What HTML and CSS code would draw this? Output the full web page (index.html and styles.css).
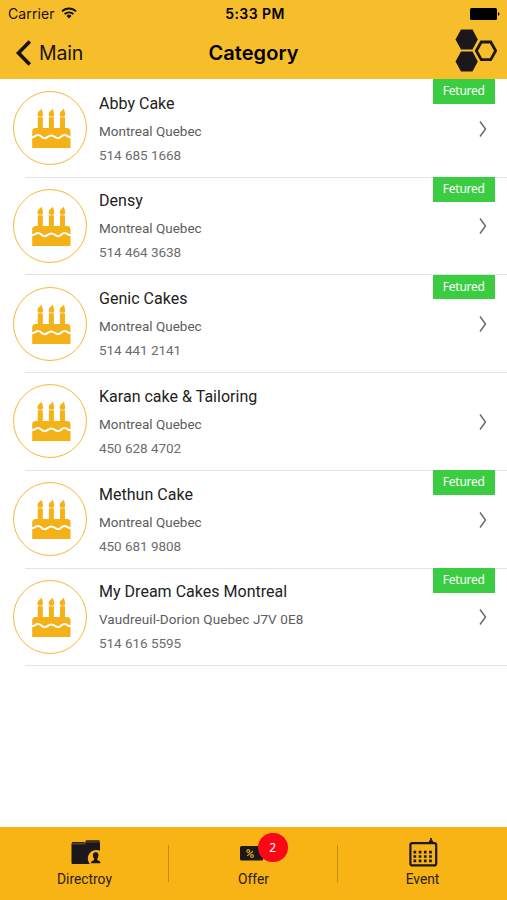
FILE: index.html
```html
<!DOCTYPE html>
<html lang="en">
<head>
<meta charset="utf-8">
<title>Category</title>
<link rel="stylesheet" href="styles.css">
</head>
<body>
<svg class="defs" aria-hidden="true">
  <symbol id="cake" viewBox="0 0 39 41">
    <path id="flame" d="M9.600.6c-.6 1.500-4.100 3-4.100 5.600a2.700 2.600 0 0 0 5.500 0c0-2-1-3.200-1.400-5.600z"/>
    <use href="#flame" x="11.200"/>
    <use href="#flame" x="22.200"/>
    <path d="M.2 40V23.500q0-3.500 3.300-3.500h2.300v-10.700h5V20h6.100v-10.700h5V20h6.100v-10.700h5V20h2.200q3.300 0 3.300 3.500V40z"/>
    <path d="M-.5 29.300C2.500 29.500 3.300 27 6 27c3 0 3.500 3.200 6.500 3.200s3.600-2.800 6.800-2.800 3.700 2.800 6.700 2.800S29.500 27 32.500 27c2.700 0 3.500 2.500 6.500 2.300" fill="none" stroke="#fff" stroke-width="2"/>
  </symbol>
  <symbol id="chevron" viewBox="0 0 10 18"><path d="M2 1.500 7.500 9 2 16.500" fill="none" stroke="#666" stroke-width="1.400"/></symbol>
</svg>

<header class="header">
  <div class="status">
    <div class="carrier"><span>Carrier</span>
      <svg class="wifi" viewBox="0 0 16 12"><g fill="none" stroke="#17120a" stroke-width="1.900"><path d="M1 4.400a10 10 0 0 1 14 0"/><path d="M3.600 7.200a6.200 6.200 0 0 1 8.800 0"/></g><path d="M8 11.400 5.500 8.900a3.500 3.500 0 0 1 5 0z" fill="#17120a"/></svg>
    </div>
    <span class="time">5:33 PM</span>
    <svg class="battery" viewBox="0 0 30 12"><rect width="27" height="12" rx="1.500"/><path d="M28 4q3 2 0 4z"/></svg>
  </div>
  <nav class="nav">
    <a class="back"><svg viewBox="0 0 17 26"><path d="M14.800 1.500 3.500 13l11.300 11.500" fill="none" stroke="#17120a" stroke-width="3.600"/></svg><span>Main</span></a>
    <h1>Category</h1>
    <svg class="logo" viewBox="0 0 42 43"><path d="M6 .5h11.500l5.300 10-5.300 10H6l-5.500-10zM6 22.500h11.500l5.300 10-5.300 10H6l-5.500-10z" fill="#1c171a"/><path d="M26.300 13h9.400l5 8.800-5 8.800h-9.400l-5-8.800z" fill="none" stroke="#1c171a" stroke-width="2.800"/></svg>
  </nav>
</header>

<main class="list">
  <article class="row"><div class="avatar"><svg><use href="#cake"/></svg></div><div class="info"><h2>Abby Cake</h2><p>Montreal Quebec</p><p class="phone">514 685 1668</p></div><span class="tag">Fetured</span><svg class="go"><use href="#chevron"/></svg></article>
  <article class="row"><div class="avatar"><svg><use href="#cake"/></svg></div><div class="info"><h2>Densy</h2><p>Montreal Quebec</p><p class="phone">514 464 3638</p></div><span class="tag">Fetured</span><svg class="go"><use href="#chevron"/></svg></article>
  <article class="row"><div class="avatar"><svg><use href="#cake"/></svg></div><div class="info"><h2>Genic Cakes</h2><p>Montreal Quebec</p><p class="phone">514 441 2141</p></div><span class="tag">Fetured</span><svg class="go"><use href="#chevron"/></svg></article>
  <article class="row"><div class="avatar"><svg><use href="#cake"/></svg></div><div class="info"><h2>Karan cake &amp; Tailoring</h2><p>Montreal Quebec</p><p class="phone">450 628 4702</p></div><svg class="go"><use href="#chevron"/></svg></article>
  <article class="row"><div class="avatar"><svg><use href="#cake"/></svg></div><div class="info"><h2>Methun Cake</h2><p>Montreal Quebec</p><p class="phone">450 681 9808</p></div><span class="tag">Fetured</span><svg class="go"><use href="#chevron"/></svg></article>
  <article class="row"><div class="avatar"><svg><use href="#cake"/></svg></div><div class="info"><h2>My Dream Cakes Montreal</h2><p class="long">Vaudreuil-Dorion Quebec J7V 0E8</p><p class="phone">514 616 5595</p></div><span class="tag">Fetured</span><svg class="go"><use href="#chevron"/></svg></article>
</main>

<footer class="tabs">
  <a class="tab"><span class="icon"><svg viewBox="0 0 32 30"><path d="M2.500 6V4.400q0-1 1-1h12L17 1.500h13q1 0 1 1V5H16.500L15 6.500z" fill="#5d4614"/><path d="M2.500 5.500H16l1.500-2H31v8.200a8.600 8.600 0 0 0-10.300 13.200H3.500q-1 0-1-1z" fill="#1c171a"/><path d="M17 1.900h13.300M3.200 3.500h12" stroke="#1c171a" stroke-width=".9"/><path d="M21.800 24.300q.2-2.600 2.700-3c1-.3.900-.9.400-1.700-2-3.700-.8-6.300 1.800-6.300s3.800 2.600 1.800 6.300c-.5.800-.6 1.400.4 1.700q2.500.4 2.700 3z" fill="#1c171a"/></svg></span><span>Directroy</span></a>
  <a class="tab"><span class="icon"><svg viewBox="0 0 32 30"><path d="M3.500 7h21l4 7.300-4 7.200h-21Q2 21.500 2 20V8.500Q2 7 3.500 7z" fill="#1c171a"/><g fill="none" stroke="#e2a41b" stroke-width="1.100"><circle cx="10.200" cy="12" r="1.400"/><circle cx="14" cy="17" r="1.400"/><path d="m9.200 16.700 5.800-4.400"/></g></svg><b class="badge">2</b></span><span>Offer</span></a>
  <a class="tab"><span class="icon"><svg viewBox="0 0 32 30"><rect x="3.400" y="4.200" width="25.800" height="22.200" rx="2" fill="none" stroke="#1c171a" stroke-width="2.200"/><path d="M22 4V1.500h1.200V-1h1.700v2.500h1.200V4z" fill="#1c171a"/><path d="M6.500 13.200h19M6.500 17.500h19M6.500 21.800h19" stroke="#1c171a" stroke-width="2.700" stroke-dasharray="2.700 2.500"/></svg></span><span>Event</span></a>
</footer>
</body>
</html>
```
FILE: styles.css
```css
* { box-sizing: border-box; }
body {
  margin: 0;
  height: 900px;
  display: flex;
  flex-direction: column;
  overflow: hidden;
  background: #fff;
  font-family: Roboto, "Liberation Sans", sans-serif;
}
.defs { position: absolute; width: 0; height: 0; }
h1, h2, p { margin: 0; }

.header { height: 79.250px; flex: none; background: #f7be2c; color: #17120a; font-family: Inter, sans-serif; }
.status { height: 27px; padding: 0 7px 0 8px; display: grid; grid-template-columns: 1fr auto 1fr; align-items: center; font-size: 14px; }
.carrier { display: flex; align-items: center; gap: 6px; letter-spacing: .1px; }
.wifi { width: 16px; height: 12px; margin-top: -2px; }
.time { font-weight: 600; letter-spacing: .45px; color: #000; position: relative; left: 1px; }
.battery { width: 30px; height: 12px; justify-self: end; }
.nav { height: 51px; padding: 0 10px 0 15px; display: grid; grid-template-columns: 1fr auto 1fr; align-items: center; }
.back { display: flex; align-items: center; gap: 7px; font-size: 19.500px; letter-spacing: -.2px; }
.back svg { width: 17px; height: 26px; }
.nav h1 { margin-right: 5px; font-size: 20px; font-weight: 600; letter-spacing: .05px; color: #000; }
.logo { width: 42px; height: 43px; justify-self: end; margin-top: -5px; }

.list { flex: 1; }
.row { position: relative; height: 97.750px; padding: 0 19px 0 13px; display: flex; align-items: center; }
.row::after { content: ""; position: absolute; left: 25px; right: 0; bottom: -.5px; height: 1px; background: #e2e2e2; }
.avatar { width: 74px; height: 74px; flex: none; border: 1.500px solid #f8b938; border-radius: 50%; display: flex; align-items: center; justify-content: center; }
.avatar svg { width: 39px; height: 41px; fill: #f5b118; margin: 1px 0 0 2px; overflow: visible; }
.info { flex: 1; margin: 3px 0 0 12px; color: #5c5c5c; font-size: 13.500px; }
.info h2 { font-size: 16px; line-height: 24px; font-weight: 400; letter-spacing: .02px; color: #222; }
.info p { line-height: 24px; margin-top: 3px; }
.info .long { letter-spacing: .08px; }
.info .phone { margin: 0 0 1px; color: #6c6c6c; letter-spacing: -.04px; }
.tag { position: absolute; top: 0; right: 12.500px; width: 61.500px; height: 24.500px; background: #3bcd41; color: #fff; font: 12px/24px "Noto Sans", sans-serif; letter-spacing: -.25px; text-align: center; }
.go { width: 10px; height: 18px; margin-top: 1px; }

.tabs { height: 73.500px; flex: none; background: #f8b414; display: grid; grid-template-columns: repeat(3, 1fr); color: #2a200e; font-size: 13.800px; }
.tab { position: relative; padding-top: 12px; display: flex; flex-direction: column; align-items: center; line-height: 20px; }
.tab + .tab::before { content: ""; position: absolute; left: -1px; top: 18px; width: 1px; height: 37px; background: #c08c17; }
.icon { position: relative; width: 32px; height: 30px; }
.icon svg { display: block; width: 32px; height: 30px; overflow: visible; }
.badge { position: absolute; left: 20.500px; top: -6px; width: 29.500px; height: 29.500px; border-radius: 50%; background: #fb0718; color: #fff; font: 12px/29px "Noto Sans", sans-serif; text-align: center; }
```
